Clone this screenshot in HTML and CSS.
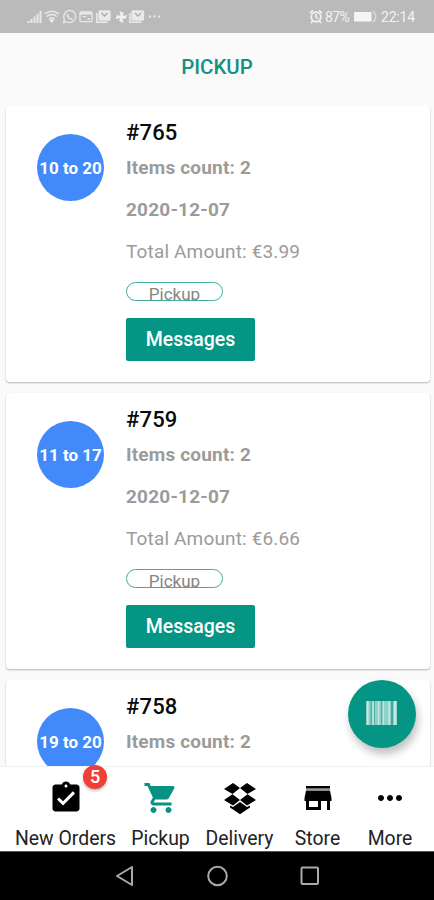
FILE: index.html
```html
<!DOCTYPE html>
<html lang="en">
<head>
<meta charset="utf-8">
<title>Pickup</title>
<link rel="stylesheet" href="styles.css">
</head>
<body>
<div class="phone">
  <header class="status">
    <svg class="status-icons" width="136" height="17" viewBox="26 8 136 17" fill="none" stroke="#e9e9e9" stroke-width="1.3">
      <path stroke-width="2" d="M28.500 23v-2M31.500 23v-4M34.500 23v-6.500M37.500 23v-9M40.500 23V11"/>
      <path d="M44.500 14q7.200-5.500 14.400 0M46.500 16.500q5.200-4 10.400 0M49 19q2.700-2 5.400 0"/><path fill="#f1f1f1" stroke="none" d="M49 19.500h5.400l-2.700 3.500z"/>
      <path d="M63.500 22.700l1-3.300a6 6 0 1 1 2.300 2.300z"/><path stroke-width="1.700" d="M67.300 14c0 3 2.400 5.300 5.200 5.200"/>
      <rect x="80" y="12" width="12" height="9.700" rx="1"/><path stroke-width="2.200" d="M80 13.500h12"/><path d="M82.500 16.700h4M87.500 19h2.500"/>
      <path stroke-width="1.600" d="M96.700 13v9.300h11"/><rect x="99" y="11" width="11" height="9" rx="1" fill="#e9e9e9"/><path stroke="#aaa" d="M101.500 13l3 3 3-3"/>
      <path fill="#f1f1f1" stroke="none" d="M120.500 16l-.8-5 4 2-.7 3 4-1-1.500 4-3-.7.800 4.700-4-2 .5-3-4.300 1 1.500-4z"/>
      <path stroke-width="1.600" d="M129.900 13v9.300h11.500"/><rect x="132" y="11" width="11.500" height="9" rx="1" fill="#e9e9e9"/><path stroke="#aaa" d="M135 13l3 3 3-3"/>
      <path stroke-width="1.800" d="M149 16.500h2M153.500 16.500h2M158 16.500h2"/>
    </svg>
    <div class="status-right">
      <svg width="14" height="15" viewBox="0 0 14 15" fill="none" stroke="#f1f1f1" stroke-width="1.700"><circle cx="7" cy="8" r="4.800"/><path d="M1 4l3-2.500M13 4l-3-2.500M7 5v3l2 2M3.500 12L2 14M10.500 12l1.500 2"/></svg>
      <span class="percent">87%</span>
      <svg class="battery" width="24" height="12" viewBox="0 0 24 12"><rect x="0" y="1" width="17.500" height="9.500" rx="1" fill="#f5f5f5"/><path d="M18.500 1h2v2.500h1.200v4.500H20.500v2.500h-2" fill="none" stroke="#e5e5e5"/></svg>
      <span class="clock">22:14</span>
    </div>
  </header>
  <h1 class="title"><span>PICKUP</span></h1>
  <main class="orders">
    <article class="card">
      <div class="slot">10 to 20</div>
      <div class="details">
        <h2>#765</h2>
        <p class="items">Items count: 2</p>
        <p class="date">2020-12-07</p>
        <p class="total">Total Amount: €3.99</p>
        <div class="tag"><span>Pickup</span></div>
        <button class="messages">Messages</button>
      </div>
    </article>
    <article class="card">
      <div class="slot">11 to 17</div>
      <div class="details">
        <h2>#759</h2>
        <p class="items">Items count: 2</p>
        <p class="date">2020-12-07</p>
        <p class="total">Total Amount: €6.66</p>
        <div class="tag"><span>Pickup</span></div>
        <button class="messages">Messages</button>
      </div>
    </article>
    <article class="card">
      <div class="slot">19 to 20</div>
      <div class="details">
        <h2>#758</h2>
        <p class="items">Items count: 2</p>
      </div>
    </article>
  </main>
  <button class="fab" aria-label="Scan barcode">
    <svg width="31" height="24" viewBox="0 0 31 24"><path fill="#8fd0c8" d="M0 0h31v24H0z"/><path fill="#4fb3a7" d="M4.500 0h1.500v24H4.500zM8 0h1v24H8zM15 0h1v24h-1z"/><path fill="#159a8b" d="M25.300 0h1.400v24h-1.400z"/><path fill="#c5e6e2" d="M1 0h1.500v24H1zM6.300 0h1.400v24H6.300zM12 0h1.200v24H12zM17 0h1v24h-1zM22.500 0h1.500v24h-1.500zM28 0h2.200v24H28z"/></svg>
  </button>
  <nav class="tabs">
    <a class="tab">
      <svg width="36" height="36" viewBox="0 0 24 24"><path d="M19 3h-4.180C14.400 1.840 13.300 1 12 1c-1.300 0-2.400.84-2.820 2H5c-1.100 0-2 .9-2 2v14c0 1.100.9 2 2 2h14c1.100 0 2-.9 2-2V5c0-1.100-.9-2-2-2zm-7 0c.55 0 1 .45 1 1s-.45 1-1 1-1-.45-1-1 .45-1 1-1zm-2 14l-4-4 1.410-1.410L10 14.170l6.590-6.590L18 9l-8 8z"/></svg>
      <span class="label">New Orders</span>
      <span class="badge">5</span>
    </a>
    <a class="tab active">
      <svg width="36" height="36" viewBox="0 0 24 24"><path d="M7 18c-1.100 0-1.990.9-1.990 2S5.900 22 7 22s2-.9 2-2-.9-2-2-2zM1 2v2h2l3.600 7.590-1.350 2.450c-.16.28-.25.61-.25.960 0 1.100.9 2 2 2h12v-2H7.420c-.14 0-.25-.11-.25-.25l.03-.12.9-1.630h7.450c.75 0 1.410-.41 1.750-1.030l3.580-6.490A1 1 0 0 0 20 4H5.210l-.94-2H1zm16 16c-1.100 0-1.990.9-1.990 2s.89 2 1.990 2 2-.9 2-2-.9-2-2-2z"/></svg>
      <span class="label">Pickup</span>
    </a>
    <a class="tab">
      <svg width="36" height="36" viewBox="0 0 36 36"><path d="M11 3l7 5-7.500 6L2 9zM25 3l9 6-8.500 5L18 8zM2 20l8.500-5.700L18 20l-7 5.500zM34 20l-8.500-5.700L18 20l7 5.500zM18 22l7 5 3-1.500v2L18 34.300l-10-6.800v-2l3 1.500z"/></svg>
      <span class="label">Delivery</span>
    </a>
    <a class="tab">
      <svg width="36" height="36" viewBox="0 0 24 24"><path d="M20 4H4v2h16V4zm1 10v-2l-1-5H4l-1 5v2h1v6h10v-6h4v6h2v-6h1zm-9 4H6v-4h6v4z"/><path fill="#999" d="M4 5.500h16v1.500H4z"/></svg>
      <span class="label">Store</span>
    </a>
    <a class="tab">
      <svg width="36" height="36" viewBox="0 0 24 24"><path d="M6 10c-1.100 0-2 .9-2 2s.9 2 2 2 2-.9 2-2-.9-2-2-2zm12 0c-1.100 0-2 .9-2 2s.9 2 2 2 2-.9 2-2-.9-2-2-2zm-6 0c-1.100 0-2 .9-2 2s.9 2 2 2 2-.9 2-2-.9-2-2-2z"/></svg>
      <span class="label">More</span>
    </a>
  </nav>
  <footer class="system">
    <svg width="20" height="22" viewBox="0 0 20 22"><path d="M18 2v18L3 11z"/></svg>
    <svg width="22" height="22" viewBox="0 0 22 22"><circle cx="11.500" cy="11" r="9.300"/></svg>
    <svg width="20" height="22" viewBox="0 0 20 22"><rect x="1.500" y="2.500" width="16.500" height="16.500" rx="1"/></svg>
  </footer>
</div>
</body>
</html>
```
FILE: styles.css
```css
* { box-sizing: border-box; }
body { margin: 0; font-family: Roboto, sans-serif; }
h1, h2, p { margin: 0; }
button { border: 0; padding: 0; font-family: inherit; }

.phone {
  position: relative;
  display: flex;
  flex-direction: column;
  width: 434px;
  height: 900px;
  overflow: hidden;
  background: #fafafa;
}

.status {
  display: flex;
  flex: none;
  justify-content: space-between;
  align-items: center;
  height: 33px;
  padding: 0 19px 0 26px;
  background: #bababa;
  color: #f3f3f3;
}
.status-right { display: flex; align-items: center; font-size: 14px; }
.percent { margin-left: 2px; width: 25px; letter-spacing: -0.6px; }
.battery { margin: 0 3px 0 4px; }
.clock { width: 34px; letter-spacing: -0.2px; }

.title {
  flex: none;
  height: 73px;
  padding-top: 20px;
  text-align: center;
  font-size: 20.5px;
  line-height: 28px;
  font-weight: 500;
  color: #159180;
}

.orders {
  display: flex;
  flex: 1;
  flex-direction: column;
  gap: 11px;
  min-height: 0;
  padding: 0 4px 0 6px;
  overflow: hidden;
}
.card {
  display: flex;
  flex: none;
  height: 276px;
  padding: 13px 31px;
  border-radius: 4px;
  background: #fff;
  box-shadow: 0 1px 2px rgba(0, 0, 0, .28);
}
.slot {
  flex: none;
  width: 67px;
  height: 67px;
  margin: 15px 22px 0 0;
  border-radius: 50%;
  background: #4289fb;
  color: #fff;
  font-size: 17px;
  font-weight: 700;
  line-height: 68px;
  text-align: center;
  white-space: nowrap;
}
.details { white-space: nowrap; color: #9b9b9b; font-size: 19px; }
.details h2 { height: 28px; font-size: 22px; line-height: 28px; font-weight: 500; letter-spacing: 0.2px; color: #0a0a0a; }
.details p { height: 42px; line-height: 42px; }
.details .items { font-weight: 700; letter-spacing: 0.18px; }
.details .date { font-weight: 700; letter-spacing: 0.2px; }
.details .total { letter-spacing: 0.15px; }
.tag {
  width: 97px;
  height: 19px;
  margin-top: 9px;
  overflow: hidden;
  border: 1.500px solid #44ae9d;
  border-radius: 10px;
  text-align: center;
  font-size: 17px;
  line-height: 22px;
  color: #858585;
}
.messages {
  display: block;
  width: 129px;
  height: 43px;
  margin-top: 17px;
  border-radius: 2px;
  background: #059585;
  color: #fff;
  font-size: 19.5px;
  font-weight: 500;
}

.fab {
  position: absolute;
  top: 680px;
  left: 348px;
  display: flex;
  align-items: center;
  justify-content: center;
  width: 68px;
  height: 68px;
  padding: 0 2px 3px 0;
  border-radius: 50%;
  background: #059585;
  box-shadow: 2px 6px 9px rgba(0, 0, 0, .25);
}

.tabs {
  display: grid;
  flex: none;
  grid-template-columns: 115px 75px 83px 73px 72px;
  height: 85px;
  padding: 13px 8px 0;
  border-top: 1px solid #f2f2f2;
  background: #fff;
}
.tab { position: relative; display: flex; flex-direction: column; align-items: center; color: #222; white-space: nowrap; }
.tab svg { fill: #000; }
.active svg { fill: #099282; }
.label { margin-top: 9px; font-size: 19.4px; line-height: 28px; }
.badge {
  position: absolute;
  top: -15px;
  left: 75px;
  width: 24px;
  height: 24px;
  border-radius: 50%;
  background: #ee4037;
  box-shadow: 0 2px 3px rgba(0, 0, 0, .25);
  color: #fff;
  font-size: 18px;
  font-weight: 500;
  line-height: 24px;
  text-align: center;
}

.system {
  display: flex;
  flex: none;
  align-items: center;
  justify-content: space-between;
  height: 49px;
  padding: 0 114px;
  border-top: 1px solid #555;
  background: #000;
}
.system svg { fill: none; stroke: #aaa; stroke-width: 2; stroke-linejoin: round; }
```
